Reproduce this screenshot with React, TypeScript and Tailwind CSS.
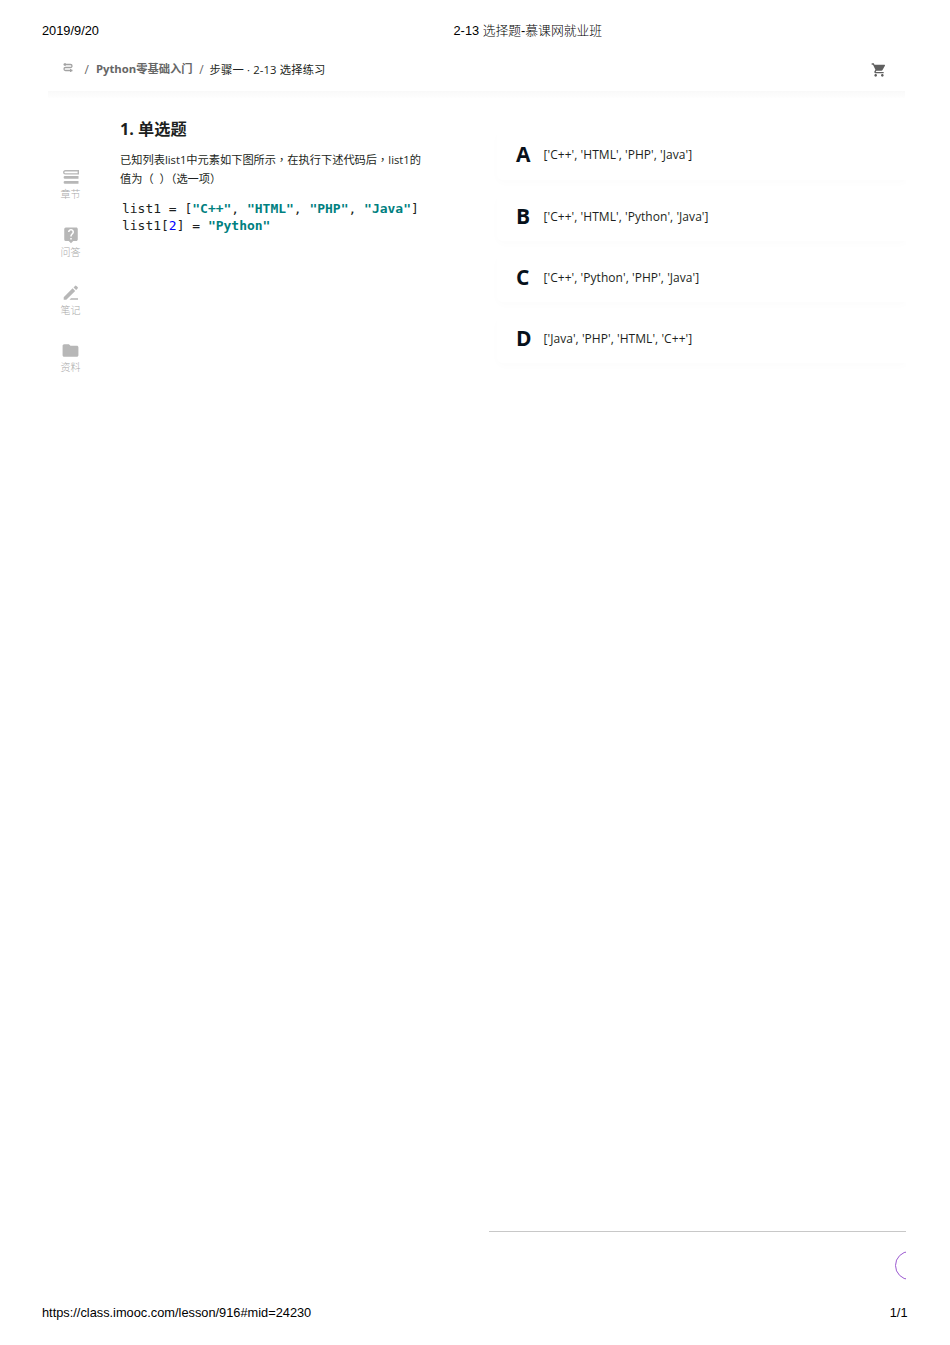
import type { ReactNode } from "react";
import { MdFolder, MdLiveHelp, MdShoppingCart } from "react-icons/md";

interface Option {
  letter: string;
  text: string;
  height: string;
}

const options: Option[] = [
  { letter: "A", text: "['C++', 'HTML', 'PHP', 'Java']", height: "h-[50px]" },
  { letter: "B", text: "['C++', 'HTML', 'Python', 'Java']", height: "h-[47px]" },
  { letter: "C", text: "['C++', 'Python', 'PHP', 'Java']", height: "h-[48px]" },
  { letter: "D", text: "['Java', 'PHP', 'HTML', 'C++']", height: "h-[47px]" },
];

function RouteIcon() {
  return (
    <svg width="10" height="11" viewBox="0 0 10 11" fill="none" stroke="#a3a3a3" strokeWidth="1.3">
      <path d="M.5 2.5h7a1.5 1.5 0 0 1 0 3h-5a1.5 1.5 0 0 0 0 3h7" />
      <path d="M2 1v3M7.7 7v3" />
    </svg>
  );
}

function ChapterIcon() {
  return (
    <svg width="16" height="16" viewBox="0 0 16 16" fill="#b7b7b7">
      <path d="M15.3 1.7H2.3a1.6 1.6 0 0 0 0 3.2h13Z" fill="none" stroke="#b7b7b7" strokeWidth="1.4" />
      <path d="M2 7h13.5v2.8H2A1.4 1.4 0 0 1 2 7ZM2 12h13.5v2.8H2A1.4 1.4 0 0 1 2 12Z" />
    </svg>
  );
}

function NoteIcon() {
  return (
    <svg width="16" height="16" viewBox="0 0 16 16" fill="#b7b7b7">
      <path d="M.7 12.2 9.6 3.3l2.6 2.6-8.9 8.9H.7ZM10.5 2.4 12 .9a1 1 0 0 1 1.4 0l1.2 1.2a1 1 0 0 1 0 1.4L13.1 5ZM8 13.3h7v1.5H6.5Z" />
    </svg>
  );
}

function SideItem({ icon, label }: { icon: ReactNode; label: string }) {
  return (
    <a className="flex h-[57.7px] flex-col items-center text-[#b7b7b7]">
      <span className="flex h-[18px] items-center">{icon}</span>
      <span className="text-[10px] leading-4 font-light text-[#a8a8a8]">{label}</span>
    </a>
  );
}

/** Full-width comma with the mark in the middle of its cell. */
function Comma() {
  return <span className="font-['Noto_Sans_CJK_TC',sans-serif]">，</span>;
}

export default function App() {
  return (
    <div className="flex h-[1345px] w-[950px] flex-col overflow-hidden bg-white font-['Open_Sans','Noto_Sans_CJK_SC',sans-serif] text-[#1c1f21]">
      <header className="flex h-[46px] shrink-0 pt-[21px] pl-[42px] font-['Liberation_Sans','Noto_Sans_CJK_SC',sans-serif] text-[12.8px] leading-5 text-black">
        <span className="w-[411.5px]">2019/9/20</span>
        <span className="font-light">2-13 选择题-慕课网就业班</span>
      </header>

      <nav className="mr-[44px] ml-[48px] flex h-[45px] shrink-0 items-center justify-between pt-0.5 pr-[19px] pl-[15px] text-[11.3px]">
        <div className="flex items-center whitespace-nowrap">
          <span className="-mt-1">
            <RouteIcon />
          </span>
          <span className="ml-[11.5px] text-xs text-[#666]">/</span>
          <span className="ml-[7px] font-bold text-[#666]">Python零基础入门</span>
          <span className="ml-[6.5px] text-xs text-[#666]">/</span>
          <span className="mt-px ml-1.5 tracking-[0.14px]">步骤一 · 2-13 选择练习</span>
        </div>
        <MdShoppingCart className="size-4 text-[#606060]" />
      </nav>
      <div className="mr-[45px] ml-[48px] h-[7px] shrink-0 bg-linear-to-b from-[#f9f9f9] to-[#fefefe]" />

      <main className="flex h-[1134px] shrink-0">
        <aside className="w-[120px] shrink-0 pt-[70.2px] pl-[21px]">
          <SideItem icon={<ChapterIcon />} label="章节" />
          <SideItem icon={<MdLiveHelp className="size-[18px]" />} label="问答" />
          <SideItem icon={<NoteIcon />} label="笔记" />
          <SideItem icon={<MdFolder className="size-[19px]" />} label="资料" />
        </aside>

        <section className="w-[369px] shrink-0 pt-5">
          <h1 className="text-[16.2px] leading-[22px] font-bold">1. 单选题</h1>
          <p className="mt-2.5 text-[11.22px] leading-[19px] whitespace-nowrap">
            已知列表list1中元素如下图所示
            <Comma />
            在执行下述代码后
            <Comma />
            list1的
            <br />
            <span className="[word-spacing:3px]">值为（ ）（选一项）</span>
          </p>
          <pre className="mt-3 ml-0.5 font-['DejaVu_Sans_Mono',monospace] text-[12.97px] leading-[17px]">
            list1 = [<b className="text-[#008080]">"C++"</b>, <b className="text-[#008080]">"HTML"</b>,{" "}
            <b className="text-[#008080]">"PHP"</b>, <b className="text-[#008080]">"Java"</b>]{"\n"}
            list1[<span className="text-[#0000ff]">2</span>] = <b className="text-[#008080]">"Python"</b>
          </pre>
        </section>

        <section className="mr-[44px] flex grow flex-col overflow-hidden border-b border-[#c8c8c8] pt-8 pl-2">
          {options.map((option) => (
            <div
              key={option.letter}
              className={`mb-[13.5px] flex shrink-0 items-center rounded-l-md pl-[19px] shadow-[0_3px_8px_rgba(0,0,0,0.016)] ${option.height}`}
            >
              <span className="mb-0.5 w-[27.5px] text-[21px] leading-6 font-bold text-[#07111b]">{option.letter}</span>
              <span className="text-xs leading-5 tracking-[0.05px] whitespace-nowrap">{option.text}</span>
            </div>
          ))}
        </section>
      </main>

      <div className="mr-[44px] flex h-[68px] shrink-0 justify-end overflow-hidden pt-[19px]">
        <div className="h-[29px] w-[11px] overflow-hidden">
          <div className="size-[29px] rounded-full border border-[#9b59d0]" />
        </div>
      </div>

      <footer className="flex justify-between pt-[3px] pr-[42.5px] pl-[42px] font-['Liberation_Sans',sans-serif] text-[12.8px] leading-5 text-black">
        <span>https://class.imooc.com/lesson/916#mid=24230</span>
        <span>1/1</span>
      </footer>
    </div>
  );
}
